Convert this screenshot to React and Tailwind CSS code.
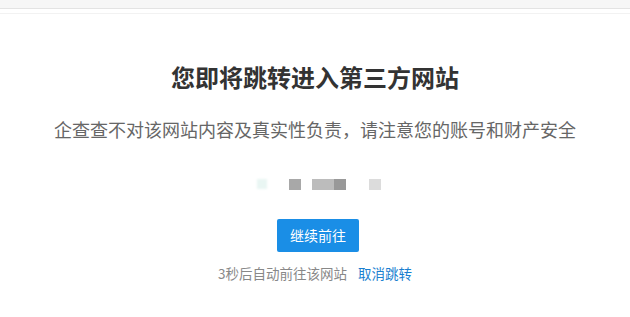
export default function App() {
  return (
    <div
      className="w-[630px] h-[317px] bg-white overflow-hidden"
      style={{ fontFamily: '"Noto Sans CJK SC", "Liberation Sans", sans-serif' }}
    >
      <div className="h-[8px] bg-[#f6f6f6] border-b border-[#e3e3e3] box-content" />
      <div className="h-[4px] border-b border-[#f2f2f2] box-content" />

      <div className="flex flex-col items-center">
        <h1 className="mt-[47px] text-[24px] leading-[32px] font-bold text-[#333]">
          您即将跳转进入第三方网站
        </h1>
        <p className="mt-[24px] text-[18px] leading-[24px] text-[#666]">
          企查查不对该网站内容及真实性负责，请注意您的账号和财产安全
        </p>

        {/* blurred url */}
        <div className="mt-[37px] h-[12px] w-[124px] ml-[8px] flex items-center">
          <span className="w-[10px] h-[10px] bg-[#e9f6f3] blur-[1px]" />
          <span className="ml-[22px] w-[12px] h-[11px] bg-[#a8a8a8] blur-[0.5px]" />
          <span className="ml-[11px] w-[22px] h-[11px] bg-[#bcbcbc] blur-[0.5px]" />
          <span className="w-[12px] h-[11px] bg-[#999] blur-[0.5px]" />
          <span className="ml-[23px] w-[12px] h-[11px] bg-[#dcdcdc] blur-[0.5px]" />
        </div>

        <button className="mt-[29px] ml-[6px] w-[82px] h-[33px] rounded-[2px] bg-[#1a8ee6] text-white text-[14px]">
          继续前往
        </button>

        <div className="mt-[11px] flex items-center text-[13.5px] leading-[20px]">
          <span className="text-[#888]">3秒后自动前往该网站</span>
          <span className="ml-[11px] text-[#1a7fd0]">取消跳转</span>
        </div>
      </div>
    </div>
  );
}
